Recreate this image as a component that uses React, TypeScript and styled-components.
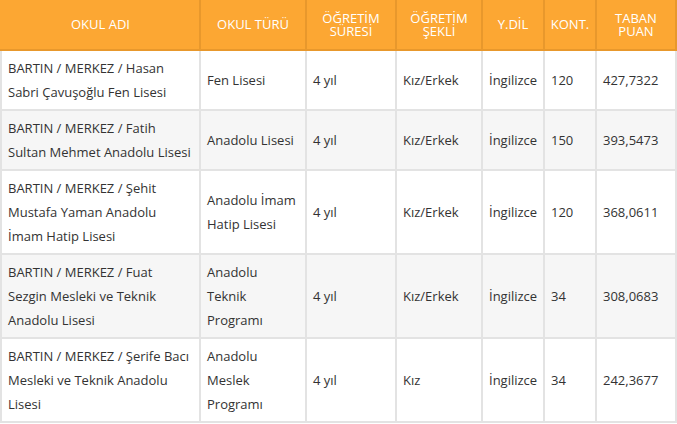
import React from "react";
import styled, { createGlobalStyle } from "styled-components";

const Global = createGlobalStyle`
  html, body { margin: 0; padding: 0; background: #ffffff; }
  body { font-family: "Open Sans", "Noto Sans", sans-serif; }
`;

const COLS = "199px 106px 90px 86px 62px 52px 80px";

const Table = styled.div`
  width: 677px;
  box-sizing: border-box;
`;

const HeadRow = styled.div`
  display: grid;
  grid-template-columns: ${COLS};
  padding-left: 2px;
  background: #fca733;
  border-bottom: 2px solid #e8982c;
  height: 51px;
  box-sizing: border-box;
`;

const HeadCell = styled.div`
  display: flex;
  align-items: center;
  justify-content: center;
  text-align: center;
  color: #ffffff;
  font-size: 13px;
  line-height: 13px;
  text-transform: uppercase;
  border-right: 2px solid #e8982c;
  box-sizing: border-box;
  padding: 0 4px;
`;

const Row = styled.div<{ $alt: boolean }>`
  display: grid;
  grid-template-columns: ${COLS};
  border-left: 2px solid #e3e3e3;
  border-bottom: 2px solid #e3e3e3;
  background: ${(p) => (p.$alt ? "#f6f6f6" : "#ffffff")};
`;

const Cell = styled.div`
  display: flex;
  align-items: center;
  padding: 5px 5px 5px 6px;
  border-right: 2px solid #e3e3e3;
  color: #333333;
  font-size: 13px;
  line-height: 24px;
  box-sizing: border-box;
  min-width: 0;
`;

const headers = [
  ["OKUL ADI"],
  ["OKUL TÜRÜ"],
  ["ÖĞRETİM", "SÜRESİ"],
  ["ÖĞRETİM", "ŞEKLİ"],
  ["Y.DİL"],
  ["KONT."],
  ["TABAN", "PUAN"],
];

const rows = [
  ["BARTIN / MERKEZ / Hasan Sabri Çavuşoğlu Fen Lisesi", "Fen Lisesi", "4 yıl", "Kız/Erkek", "İngilizce", "120", "427,7322"],
  ["BARTIN / MERKEZ / Fatih Sultan Mehmet Anadolu Lisesi", "Anadolu Lisesi", "4 yıl", "Kız/Erkek", "İngilizce", "150", "393,5473"],
  ["BARTIN / MERKEZ / Şehit Mustafa Yaman Anadolu İmam Hatip Lisesi", "Anadolu İmam Hatip Lisesi", "4 yıl", "Kız/Erkek", "İngilizce", "120", "368,0611"],
  ["BARTIN / MERKEZ / Fuat Sezgin Mesleki ve Teknik Anadolu Lisesi", "Anadolu Teknik Programı", "4 yıl", "Kız/Erkek", "İngilizce", "34", "308,0683"],
  ["BARTIN / MERKEZ / Şerife Bacı Mesleki ve Teknik Anadolu Lisesi", "Anadolu Meslek Programı", "4 yıl", "Kız", "İngilizce", "34", "242,3677"],
];

export default function App() {
  return (
    <>
      <Global />
      <Table>
        <HeadRow>
          {headers.map((h, i) => (
            <HeadCell key={i}>
              <span>
                {h.map((l, j) => (
                  <React.Fragment key={j}>
                    {j > 0 && <br />}
                    {l}
                  </React.Fragment>
                ))}
              </span>
            </HeadCell>
          ))}
        </HeadRow>
        {rows.map((r, i) => (
          <Row key={i} $alt={i % 2 === 1}>
            {r.map((c, j) => (
              <Cell key={j}>
                <span>{c}</span>
              </Cell>
            ))}
          </Row>
        ))}
      </Table>
    </>
  );
}
